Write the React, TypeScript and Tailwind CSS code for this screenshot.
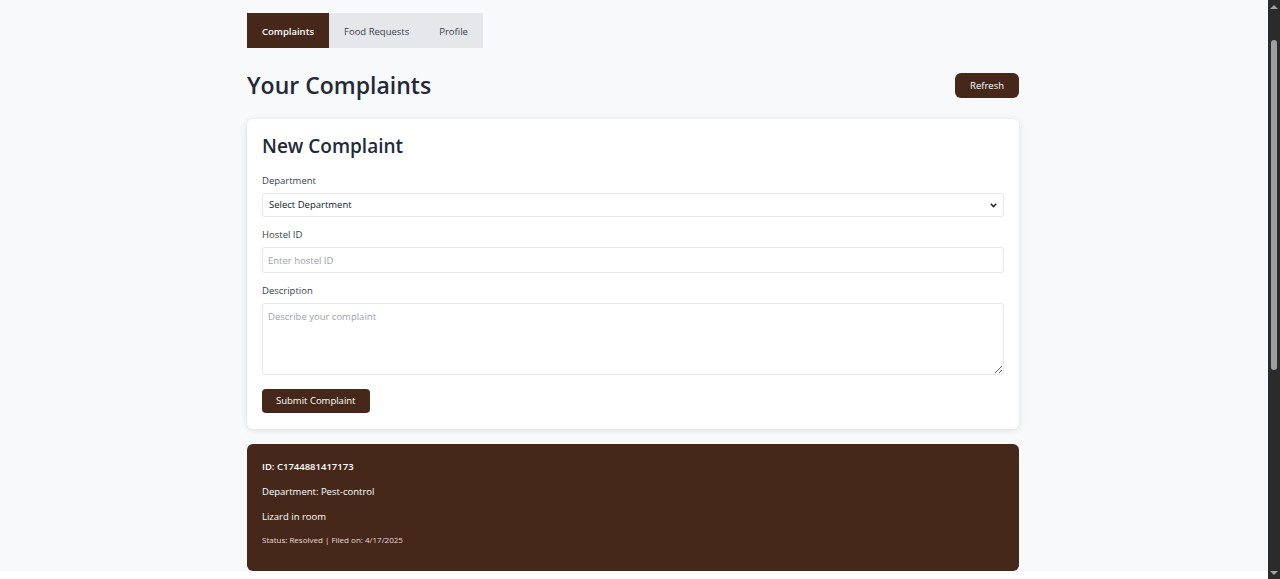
import React from "react";

const font = { fontFamily: '"Open Sans", "Noto Sans", sans-serif' };

const Tabs: React.FC = () => {
  return (
    <div className="flex w-fit bg-[#e5e7eb] text-[9.5px]">
      <button className="h-[35px] px-[15px] pt-[3px] bg-[#45281a] text-white font-semibold">
        Complaints
      </button>
      <button className="h-[35px] px-[15px] pt-[3px] text-[#374151]">
        Food Requests
      </button>
      <button className="h-[35px] px-[15px] pt-[3px] text-[#374151]">
        Profile
      </button>
    </div>
  );
};

const Field: React.FC<{ label: string; children: React.ReactNode }> = ({
  label,
  children,
}) => (
  <div className="flex flex-col">
    <label className="text-[9.5px] leading-[15px] text-[#374151] mb-[5px]">
      {label}
    </label>
    {children}
  </div>
);

// fake window scrollbar, the headless browser hides the real one
const Scrollbar: React.FC = () => (
  <div className="w-[12px] h-full bg-[#2b2b2b] flex flex-col items-center shrink-0">
    <div className="mt-[5px] w-0 h-0 border-l-[4px] border-r-[4px] border-b-[4px] border-l-transparent border-r-transparent border-b-[#a3a3a3]" />
    <div className="mt-[31px] w-[6px] h-[330px] rounded-full bg-[#9f9f9f]" />
    <div className="flex-1" />
    <div className="mb-[4px] w-0 h-0 border-l-[4px] border-r-[4px] border-t-[4px] border-l-transparent border-r-transparent border-t-[#a3a3a3]" />
  </div>
);

export default function App() {
  return (
    <div className="h-screen flex overflow-hidden" style={font}>
      <div className="flex-1 overflow-hidden bg-white">
        <div className="bg-[#f8f9fb] text-[#1f2937] pr-[2px]">
          <div className="w-[772px] mx-auto pt-[13px]">
            <Tabs />

            <div className="flex items-center justify-between mt-[24px] mb-[21px]">
              <h1 className="text-[23px] font-semibold leading-[26px]">
                Your Complaints
              </h1>
              <button className="h-[25px] px-[15px] pt-[2px] rounded-md bg-[#45281a] text-white text-[9.5px]">
                Refresh
              </button>
            </div>

            <div className="bg-white rounded-md shadow-[0_1px_6px_rgba(0,0,0,0.12)] px-[15px] pt-[13px] pb-[16px]">
              <h2 className="text-[19px] font-semibold leading-[28px] mb-[13px]">
                New Complaint
              </h2>
              <div className="flex flex-col gap-[10px]">
                <Field label="Department">
                  <div className="relative h-[24px]">
                    <select className="block w-full h-[24px] appearance-none rounded-[3px] border border-[#e5e7eb] px-[6px] text-[9.5px] text-[#111827] bg-white">
                      <option>Select Department</option>
                      <option>Pest-control</option>
                      <option>Electrical</option>
                      <option>Plumbing</option>
                    </select>
                    <svg
                      className="absolute right-[7px] top-[10px] pointer-events-none"
                      width="7"
                      height="5"
                      viewBox="0 0 7 5"
                    >
                      <path
                        d="M0.8 0.8 L3.5 3.6 L6.2 0.8"
                        fill="none"
                        stroke="#222"
                        strokeWidth="1.5"
                      />
                    </svg>
                  </div>
                </Field>
                <Field label="Hostel ID">
                  <input
                    className="h-[26px] rounded-[3px] border border-[#e5e7eb] px-[5px] text-[9.5px] placeholder:text-[#9ca3af]"
                    placeholder="Enter hostel ID"
                  />
                </Field>
                <Field label="Description">
                  <textarea
                    className="h-[72px] rounded-[3px] border border-[#e5e7eb] px-[5px] py-[6px] text-[9.5px] placeholder:text-[#9ca3af]"
                    placeholder="Describe your complaint"
                  />
                </Field>
              </div>
              <button className="mt-[14px] h-[24px] px-[14px] pt-[1px] rounded-[4px] bg-[#45281a] text-white text-[9.5px]">
                Submit Complaint
              </button>
            </div>

            <div className="mt-[15px] bg-[#45281a] rounded-md text-white px-[15px] pt-[15px] pb-[25px] flex flex-col gap-[10px]">
              <div className="text-[9.5px] leading-[15px] font-semibold">
                ID: C1744881417173
              </div>
              <div className="text-[9.5px] leading-[15px]">
                Department: Pest-control
              </div>
              <div className="text-[9.5px] leading-[15px]">Lizard in room</div>
              <div className="text-[8px] leading-[12px] text-[#e5ddd8]">
                Status: Resolved | Filed on: 4/17/2025
              </div>
            </div>
          </div>
        </div>
        <div className="h-[40px] bg-white" />
      </div>
      <Scrollbar />
    </div>
  );
}
